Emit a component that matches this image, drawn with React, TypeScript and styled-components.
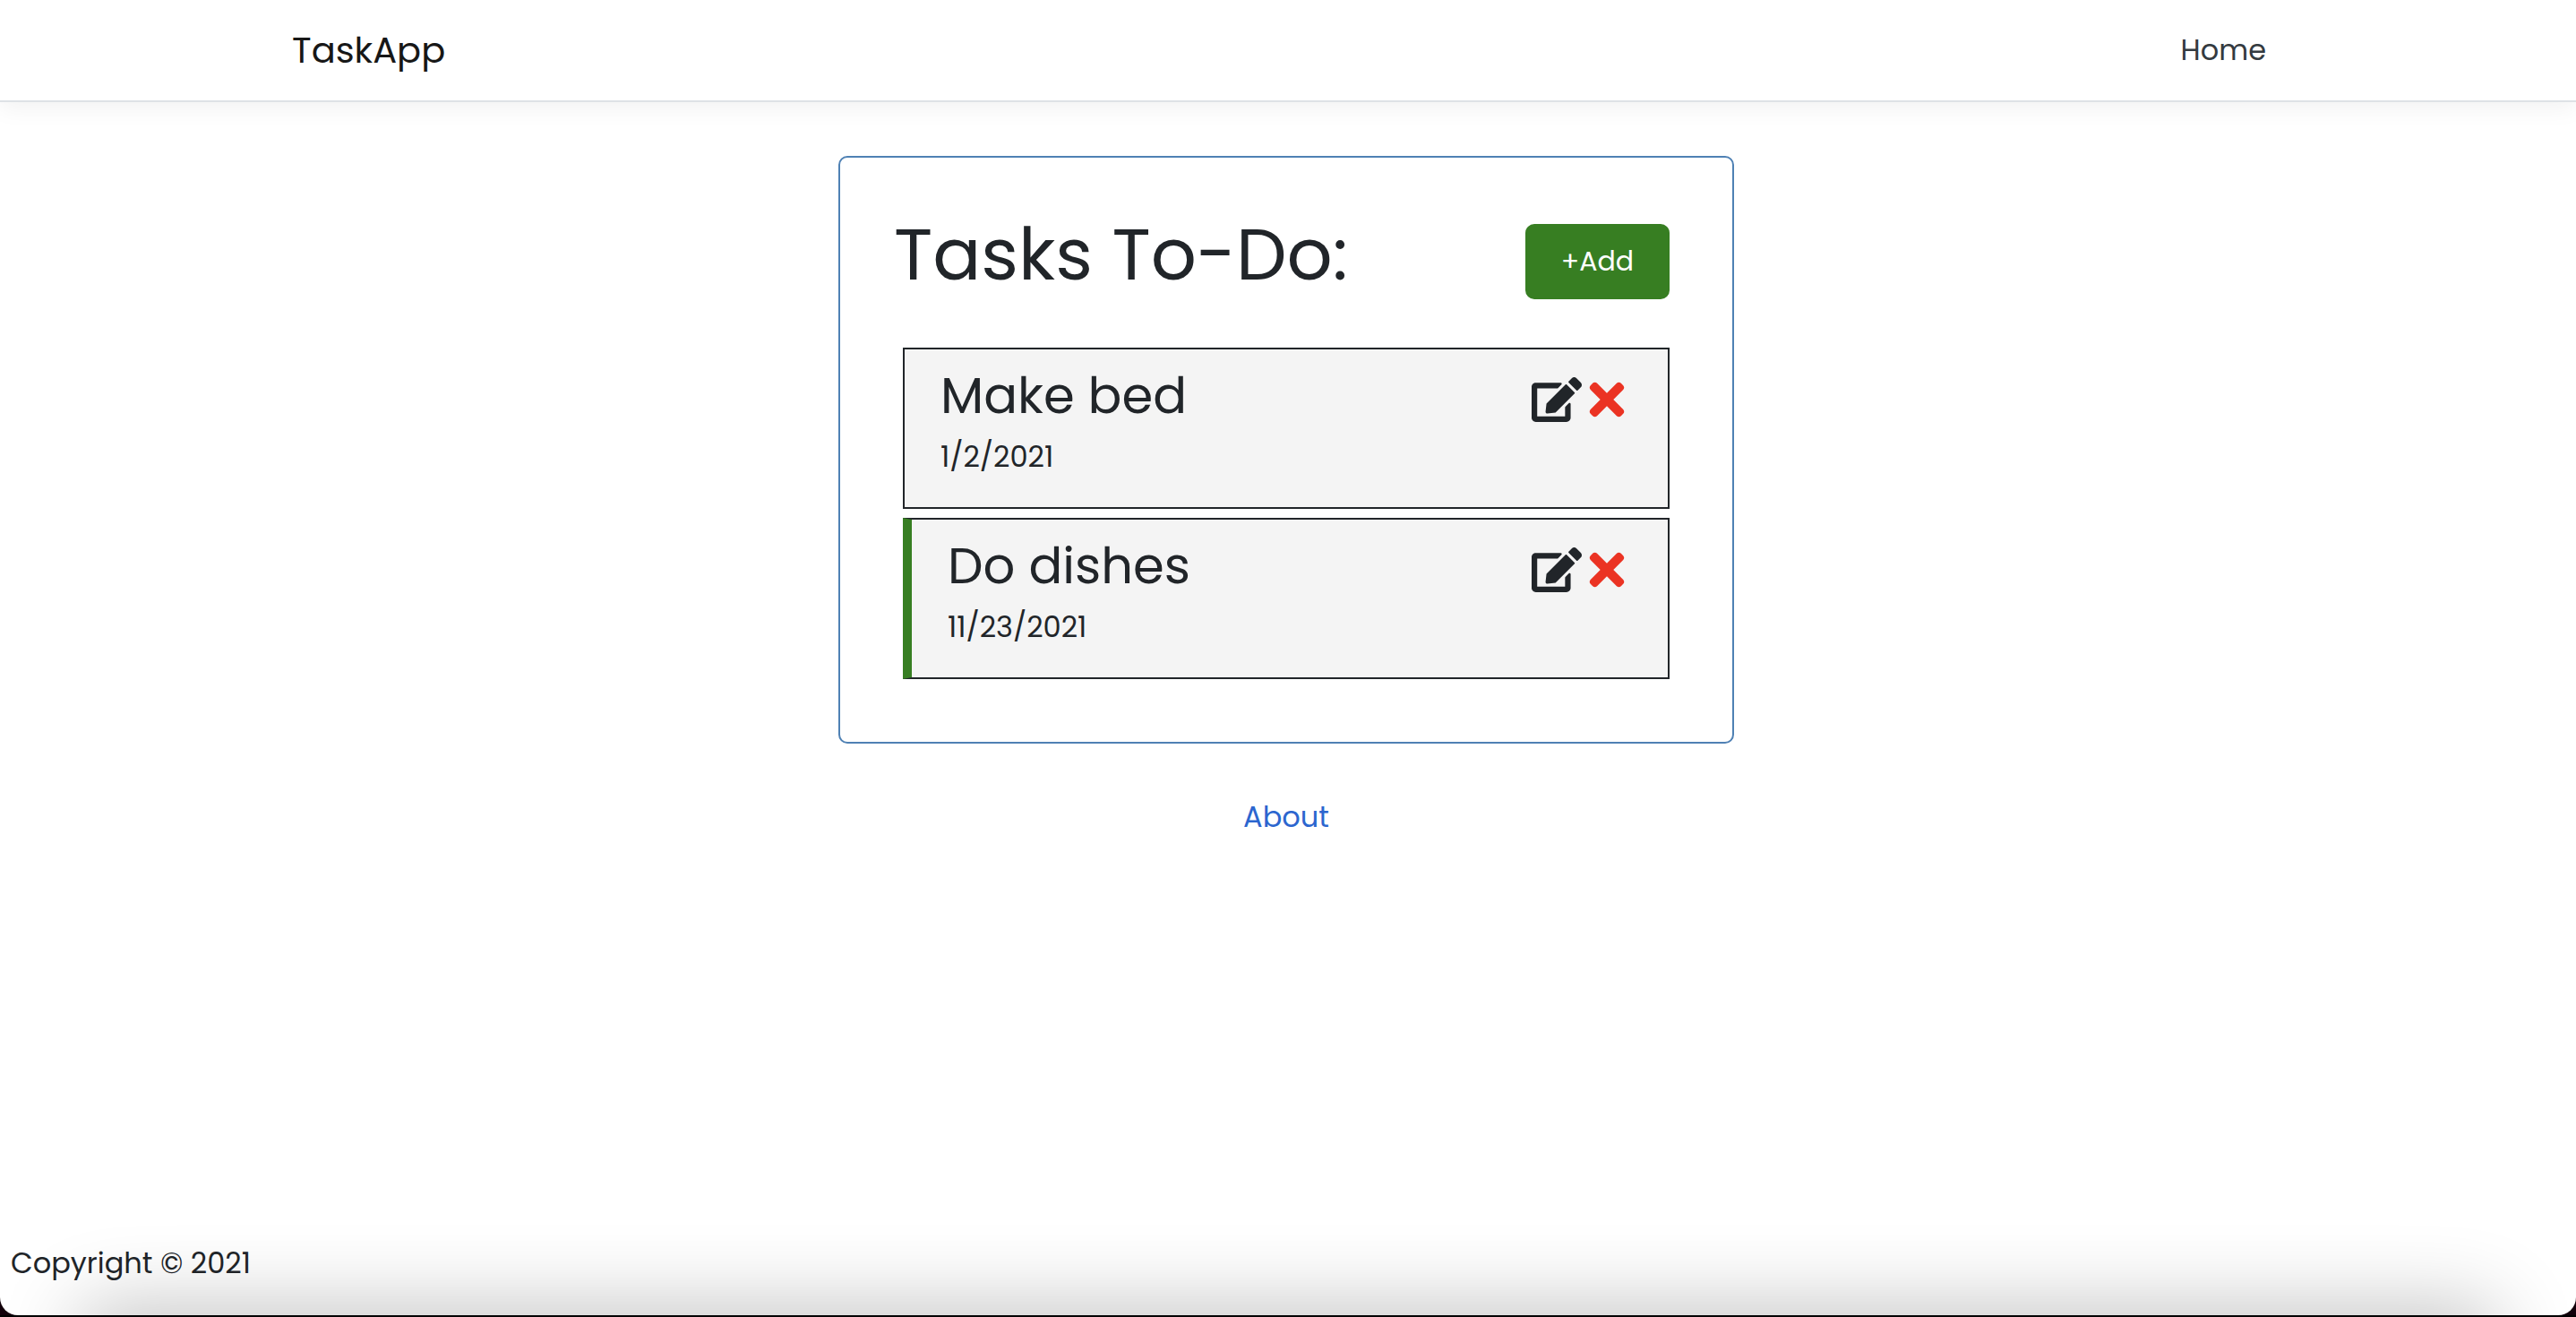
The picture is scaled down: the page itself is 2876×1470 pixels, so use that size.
import React from "react";
import styled, { createGlobalStyle } from "styled-components";
import { FaEdit, FaTimes } from "react-icons/fa";

const GlobalStyle = createGlobalStyle`
  *, *::before, *::after { box-sizing: border-box; }
  body {
    margin: 0;
    background: #12000a;
    color: #212529;
    font-family: Poppins, Inter, "Open Sans", sans-serif;
    font-size: 32px;
    line-height: 48px;
  }
  h1, h2, p { margin: 0; font-weight: 400; }
  button { font: inherit; border: 0; cursor: pointer; }
  a { text-decoration: none; }
`;

const Frame = styled.div`
  min-height: 100vh;
  display: flex;
  flex-direction: column;
  border-bottom: 2px solid #000;
`;

const Page = styled.div`
  flex: 1;
  display: flex;
  flex-direction: column;
  position: relative;
  overflow: hidden;
  background: #fff;
  border-radius: 0 0 20px 20px;

  &::after {
    content: "";
    position: absolute;
    left: 100px;
    right: 100px;
    top: 100%;
    height: 80px;
    box-shadow: 0 0 90px 10px rgba(0, 0, 0, 0.24);
    pointer-events: none;
  }
`;

const Header = styled.header`
  border-bottom: 2px solid #dee2e6;
  box-shadow: 0 8px 24px rgba(0, 0, 0, 0.05);
`;

const Nav = styled.nav`
  width: 100%;
  max-width: 2280px;
  height: 112px;
  margin: 0 auto;
  padding: 0 28px;
  display: flex;
  align-items: center;
  justify-content: space-between;
`;

const Brand = styled.a`
  color: #171717;
  font-size: 40px;
`;

const NavLink = styled.a`
  padding: 0 20px;
  color: #343a40;
`;

const Main = styled.main`
  flex: 1;
  padding: 60px 4px 0 0;
  display: flex;
  flex-direction: column;
  align-items: center;
`;

const Card = styled.section`
  width: 100%;
  max-width: 1000px;
  padding: 60px;
  border: 2px solid #4f81b4;
  border-radius: 10px;
`;

const CardHeader = styled.div`
  margin-bottom: 30px;
  padding-right: 10px;
  display: flex;
  align-items: center;
  justify-content: space-between;
`;

const Title = styled.h1`
  padding-bottom: 16px;
  font-size: 80px;
  line-height: 96px;
`;

const AddButton = styled.button`
  padding: 18px 40px;
  background: #377e22;
  color: #fff;
  font-size: 30px;
  border-radius: 10px;
`;

const TaskList = styled.ul`
  list-style: none;
  margin: 0;
  padding: 10px;
  display: grid;
  gap: 10px;
`;

const TaskRow = styled.li<{ $reminder: boolean }>`
  min-height: 180px;
  padding: 18px 40px;
  display: flex;
  align-items: flex-start;
  justify-content: space-between;
  background: #f4f4f4;
  border: 2px solid #212529;
  ${({ $reminder }) => $reminder && "border-left: 10px solid #377e22;"}
`;

const TaskName = styled.h2`
  padding-bottom: 10px;
  font-size: 56px;
  line-height: 68px;
`;

const Actions = styled.div`
  display: flex;
  padding-top: 10px;
`;

const IconButton = styled.button<{ $color: string }>`
  display: flex;
  padding: 0;
  background: none;
  color: ${({ $color }) => $color};
  font-size: 56px;
`;

const AboutLink = styled.a`
  margin-top: 58px;
  color: #2c66cf;
`;

const Footer = styled.footer`
  padding: 0 12px 34px;
`;

const tasks = [
  { name: "Make bed", day: "1/2/2021", reminder: false },
  { name: "Do dishes", day: "11/23/2021", reminder: true },
];

export default function App() {
  return (
    <Frame>
      <GlobalStyle />
      <Page>
        <Header>
          <Nav>
            <Brand href="#">TaskApp</Brand>
            <NavLink href="#">Home</NavLink>
          </Nav>
        </Header>
        <Main>
          <Card>
            <CardHeader>
              <Title>Tasks To-Do:</Title>
              <AddButton type="button">+Add</AddButton>
            </CardHeader>
            <TaskList>
              {tasks.map((task) => (
                <TaskRow key={task.name} $reminder={task.reminder}>
                  <div>
                    <TaskName>{task.name}</TaskName>
                    <p>{task.day}</p>
                  </div>
                  <Actions>
                    <IconButton type="button" $color="#212529" aria-label={`Edit ${task.name}`}>
                      <FaEdit />
                    </IconButton>
                    <IconButton type="button" $color="#eb3323" aria-label={`Delete ${task.name}`}>
                      <FaTimes />
                    </IconButton>
                  </Actions>
                </TaskRow>
              ))}
            </TaskList>
          </Card>
          <AboutLink href="#">About</AboutLink>
        </Main>
        <Footer>Copyright © 2021</Footer>
      </Page>
    </Frame>
  );
}
